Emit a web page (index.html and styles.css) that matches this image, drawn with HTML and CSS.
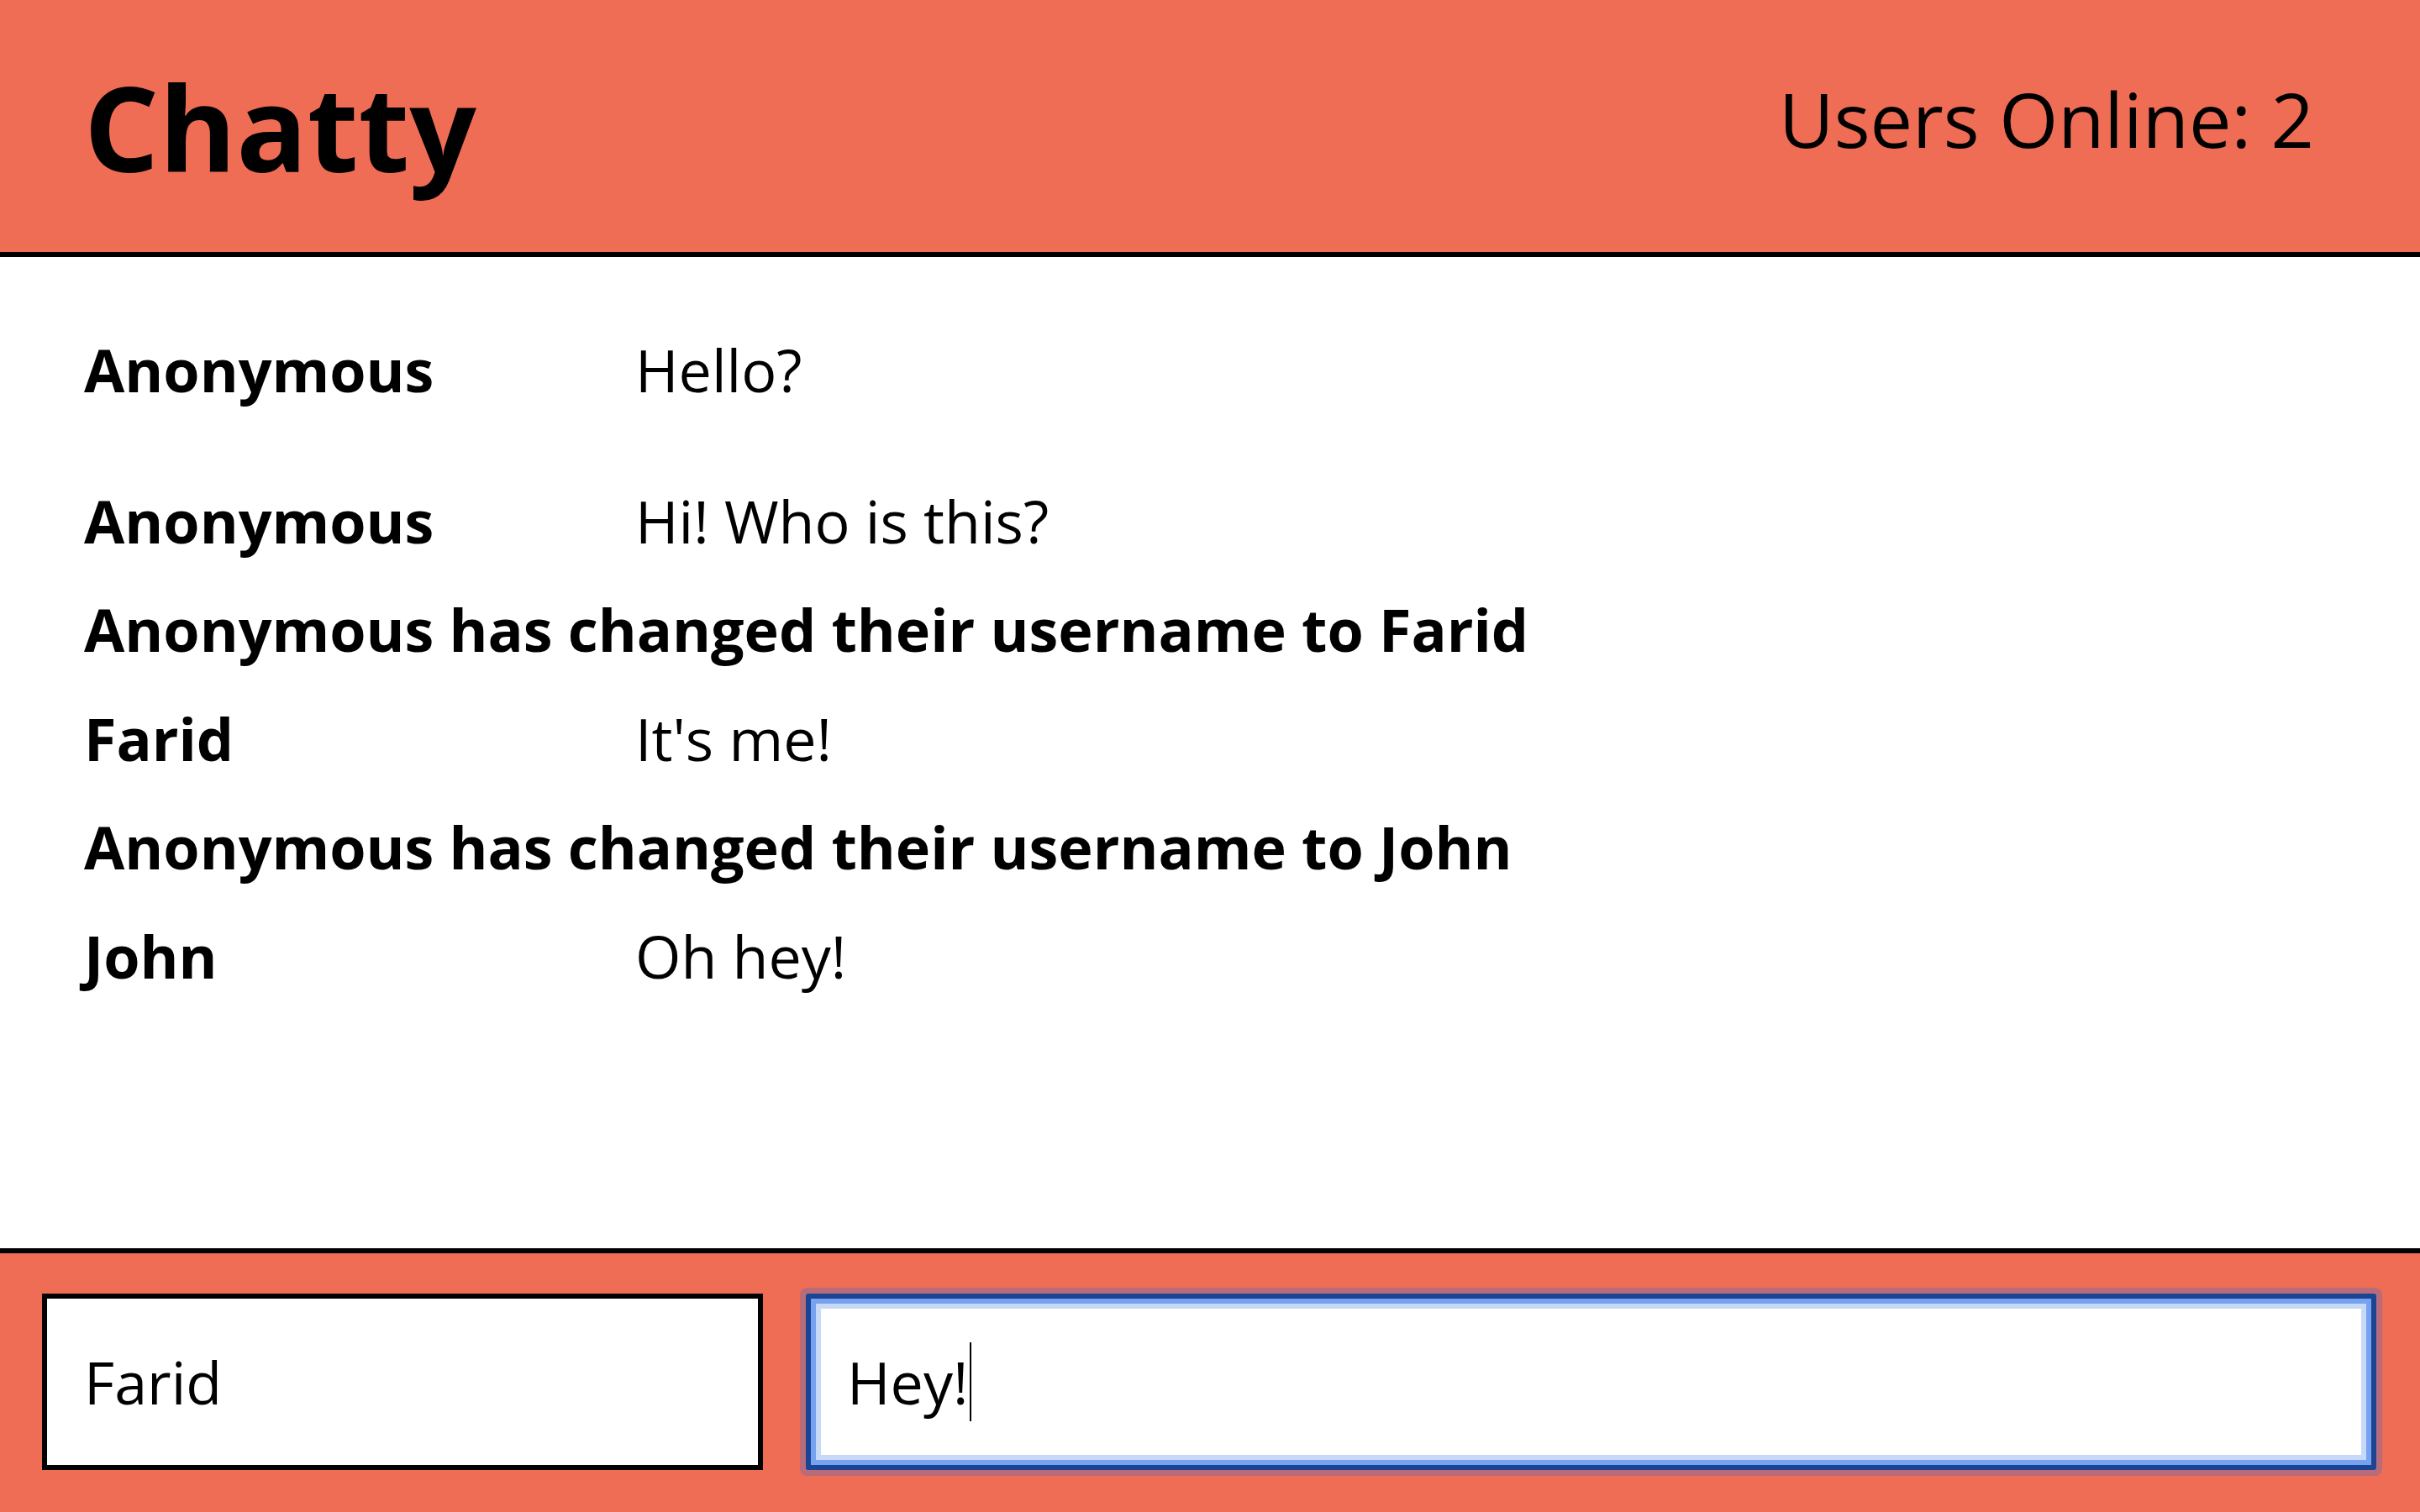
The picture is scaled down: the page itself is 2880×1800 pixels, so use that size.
FILE: index.html
```html
<!DOCTYPE html>
<html lang="en">
<head>
<meta charset="utf-8">
<title>Chatty</title>
<link rel="stylesheet" href="styles.css">
</head>
<body>
<header class="topbar">
  <h1 class="brand">Chatty</h1>
  <div class="online">Users Online: 2</div>
</header>
<main class="messages">
  <div class="msg first"><span class="user">Anonymous</span><span class="text">Hello?</span></div>
  <div class="msg"><span class="user">Anonymous</span><span class="text">Hi! Who is this?</span></div>
  <div class="notice">Anonymous has changed their username to Farid</div>
  <div class="msg"><span class="user">Farid</span><span class="text">It's me!</span></div>
  <div class="notice">Anonymous has changed their username to John</div>
  <div class="msg"><span class="user">John</span><span class="text">Oh hey!</span></div>
</main>
<footer class="composer">
  <input class="field username" type="text" value="Farid">
  <span class="message-wrap">
    <input class="field message" type="text" value="Hey!">
    <span class="caret"></span>
  </span>
</footer>
</body>
</html>
```
FILE: styles.css
```css
html, body {
  margin: 0;
  padding: 0;
}
body {
  height: 100vh;
  display: flex;
  flex-direction: column;
  font-family: "Open Sans", "DejaVu Sans", sans-serif;
  color: #000;
  background: #fff;
}
.topbar {
  height: 300px;
  flex: none;
  display: flex;
  align-items: center;
  justify-content: space-between;
  padding: 0 126px 0 100px;
  background: #ef6c55;
  border-bottom: 6px solid #000;
}
.brand {
  margin: 0;
  font-size: 140px;
  font-weight: 700;
  line-height: normal;
}
.online {
  font-size: 90px;
  font-weight: 400;
  line-height: normal;
  margin-bottom: 18px;
}
.messages {
  flex: 1;
  display: flex;
  flex-direction: column;
  gap: 31.6px;
  padding: 85px 100px 0 100px;
  font-size: 70px;
  line-height: 98px;
}
.msg {
  display: grid;
  grid-template-columns: 656px 1fr;
}
.msg.first {
  margin-bottom: 50px;
}
.user, .notice {
  font-weight: 700;
}
.text {
  font-weight: 400;
}
.composer {
  flex: none;
  display: flex;
  gap: 51px;
  padding: 48px 52px 50px 50px;
  background: #ef6c55;
  border-top: 6px solid #000;
}
.field {
  box-sizing: border-box;
  height: 210px;
  margin: 0;
  padding: 0 44px;
  font-family: "Open Sans", "DejaVu Sans", sans-serif;
  font-size: 70px;
  color: #000;
  background: #fff;
  outline: none;
}
.username {
  width: 858px;
  flex: none;
  border: 6px solid #000;
  border-radius: 0;
}
.message-wrap {
  flex: 1;
  min-width: 0;
  display: flex;
  position: relative;
}
.message {
  flex: 1;
  min-width: 0;
  padding-left: 43px;
  border: 6px solid #1b4494;
  border-radius: 3px;
  box-shadow:
    inset 0 0 0 6px #77a2f0,
    inset 0 0 0 12px #c8d9f8,
    0 0 0 7px rgba(129, 106, 156, 0.5);
}
.caret {
  position: absolute;
  left: 195px;
  top: 58px;
  width: 2px;
  height: 94px;
  background: #000;
}
.field:focus {
  outline: none;
}
```
